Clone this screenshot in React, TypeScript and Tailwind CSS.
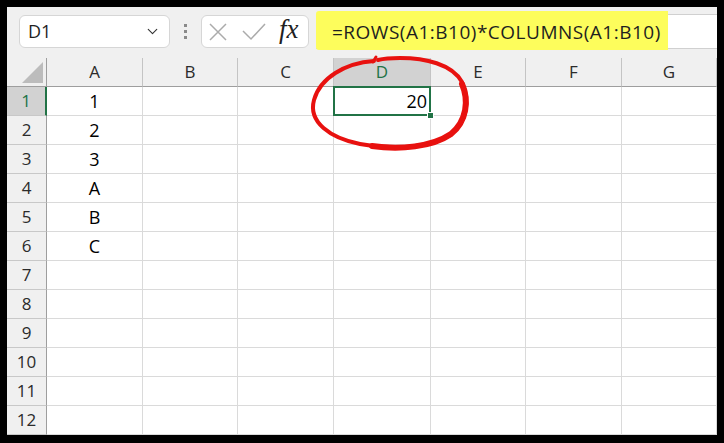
import { ChevronDown } from "lucide-react";

const cols = ["A", "B", "C", "D", "E", "F", "G"];
const rows = Array.from({ length: 12 }, (_, i) => i + 1);

const values: Record<string, string> = {
  A1: "1",
  A2: "2",
  A3: "3",
  A4: "A",
  A5: "B",
  A6: "C",
  D1: "20",
};

const ui = { fontFamily: '"Open Sans", "Noto Sans", sans-serif' };

function Toolbar() {
  return (
    <div className="flex items-start h-[51px] bg-[#f0f0f0] pl-[12px]">
      {/* name box */}
      <div className="mt-[8px] w-[151px] h-[33px] bg-white border border-[#d6d6d6] rounded-[6px] flex items-center justify-between pl-[8px] pr-[8px]">
        <span className="text-[18px] text-[#1f1f1f]">D1</span>
        <ChevronDown size={17} strokeWidth={1.6} className="text-[#333]" />
      </div>

      <div className="mt-[17px] ml-[14px] flex flex-col gap-[3px]">
        <span className="w-[3px] h-[3px] bg-[#8a8a8a]" />
        <span className="w-[3px] h-[3px] bg-[#8a8a8a]" />
        <span className="w-[3px] h-[3px] bg-[#8a8a8a]" />
      </div>

      {/* cancel / enter / fx */}
      <div className="mt-[8px] ml-[14px] w-[108px] h-[33px] bg-white border border-[#d6d6d6] rounded-[6px] flex items-center px-[6px]">
        <svg width="20" height="20" viewBox="0 0 20 20">
          <path d="M2 2 L18 18 M18 2 L2 18" stroke="#ababab" strokeWidth="1.5" fill="none" />
        </svg>
        <svg width="24" height="20" viewBox="0 0 24 20" className="ml-[14px]">
          <path d="M1 9 L9 17 L23 2" stroke="#ababab" strokeWidth="1.5" fill="none" />
        </svg>
        <span
          className="ml-[13px] text-[27px] italic text-[#1f1f1f] leading-none -mt-[4px]"
          style={{ fontFamily: '"Liberation Serif", "DejaVu Serif", serif' }}
        >
          fx
        </span>
      </div>

      {/* formula bar */}
      <div className="relative mt-[7px] ml-[7px] flex-1 h-[35px] bg-white border-y border-[#d0d0d0]">
        <div className="absolute left-0 top-[-4px] w-[352px] h-[39px] bg-[#fdfd5c] rounded-l-[3px] flex items-center pl-[16px] pt-[4px]">
          <span className="text-[19px] text-[#1f1f1f] tracking-[0.5px]">=ROWS(A1:B10)*COLUMNS(A1:B10)</span>
        </div>
      </div>
    </div>
  );
}

function Sheet() {
  return (
    <div className="grid grid-cols-[40px_96px_95px_96px_97px_95px_96px_1fr] bg-white">
      {/* header row */}
      <div className="relative h-[29px] bg-[#f0f0f0] border-b border-r border-[#9e9e9e]">
        <svg width="40" height="29" className="absolute inset-0">
          <polygon points="36,4 36,25 15,25" fill="#bcbcbc" />
        </svg>
      </div>
      {cols.map((c) => (
        <div
          key={c}
          className={
            c === "D"
              ? "h-[29px] bg-[#d2d2d2] border-b border-b-[#9e9e9e] border-r border-r-[#c4c4c4] flex items-center justify-center text-[17px] text-[#217346]"
              : "h-[29px] bg-[#f0f0f0] border-b border-b-[#9e9e9e] border-r border-r-[#c4c4c4] flex items-center justify-center text-[17px] text-[#2b2b2b]"
          }
        >
          {c}
        </div>
      ))}

      {rows.map((r) => (
        <Row key={r} r={r} />
      ))}
    </div>
  );
}

function Row({ r }: { r: number }) {
  const active = r === 1;
  return (
    <>
      <div
        className={
          active
            ? "h-[29px] bg-[#d2d2d2] border-b border-b-[#c8c8c8] border-r-2 border-r-[#217346] flex items-center justify-center text-[17px] text-[#217346]"
            : "h-[29px] bg-[#f0f0f0] border-b border-b-[#c8c8c8] border-r border-r-[#9e9e9e] flex items-center justify-center text-[17px] text-[#2b2b2b]"
        }
      >
        {r}
      </div>
      {cols.map((c) => {
        const key = `${c}${r}`;
        const v = values[key];
        if (key === "D1") {
          return (
            <div key={key} className="relative h-[29px] border-b border-r border-[#dadada]">
              <div className="absolute left-[-1px] top-[-1px] right-[-1px] bottom-[-1px] border-2 border-[#217346] flex items-center justify-end pr-[2px] text-[18px] text-black">
                {v}
              </div>
              <div className="absolute right-[-4px] bottom-[-4px] w-[7px] h-[7px] bg-[#217346] border border-white" />
            </div>
          );
        }
        return (
          <div
            key={key}
            className="h-[29px] border-b border-r border-[#dadada] flex items-center justify-center text-[18px] text-black"
          >
            {v}
          </div>
        );
      })}
    </>
  );
}

export default function App() {
  return (
    <div className="relative w-[724px] h-[443px] bg-black pt-[7px] pl-[7px] pr-[7px] pb-[8px] overflow-hidden" style={ui}>
      <div className="w-full h-full bg-white overflow-hidden">
        <Toolbar />
        <Sheet />
      </div>

      {/* hand-drawn red circle */}
      <svg
        className="absolute inset-0 pointer-events-none"
        width="724"
        height="443"
        viewBox="0 0 724 443"
      >
        <path
          d="M374 61 C345 63 320 78 314 100 C308 122 330 138 360 144 C390 150 430 148 450 135 C468 122 470 100 462 82 C452 64 425 58 400 58 C390 58 382 59 378 60"
          stroke="#e8110f"
          strokeWidth="4"
          fill="none"
          strokeLinecap="round"
        />
        <path
          d="M372 146 C400 150 432 147 451 134 C467 121 469 100 462 84"
          stroke="#e8110f"
          strokeWidth="6"
          fill="none"
          strokeLinecap="round"
        />
        <path d="M373 62 L376 57" stroke="#e8110f" strokeWidth="3" strokeLinecap="round" />
      </svg>
    </div>
  );
}
